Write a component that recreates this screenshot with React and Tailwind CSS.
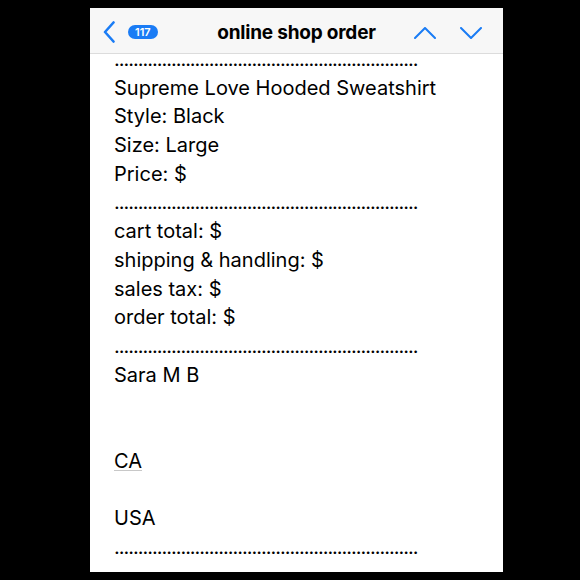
import { Fragment } from 'react'

const DOTS = '.'.repeat(64)

const LINES = [
  { text: DOTS, dots: true },
  { text: 'Supreme Love Hooded Sweatshirt' },
  { text: 'Style: Black' },
  { text: 'Size: Large' },
  { text: 'Price: $' },
  { text: DOTS, dots: true },
  { text: 'cart total: $' },
  { text: 'shipping & handling: $' },
  { text: 'sales tax: $' },
  { text: 'order total: $' },
  { text: DOTS, dots: true },
  { text: 'Sara M B' },
  { text: '' },
  { text: '' },
  { text: 'CA', link: true },
  { text: '' },
  { text: 'USA' },
  { text: DOTS, dots: true },
]

const ChevronLeft = () => (
  <svg width="12" height="22" viewBox="0 0 12 22" fill="none">
    <path d="M10.5 1.5 L2 11 L10.5 20.5" stroke="#1a7cf5" strokeWidth="2.6" strokeLinecap="round" strokeLinejoin="round" />
  </svg>
)

const Chevron = ({ up }) => (
  <svg width="22" height="12" viewBox="0 0 22 12" fill="none">
    <path
      d={up ? 'M1 11 L11 1 L21 11' : 'M1 1 L11 11 L21 1'}
      stroke="#1a7cf5"
      strokeWidth="2"
      strokeLinecap="round"
      strokeLinejoin="round"
    />
  </svg>
)

export default function App() {
  return (
    <div className="h-[580px] w-[580px] bg-black pt-[8px] pl-[90px] font-['Inter','Liberation_Sans',sans-serif]">
      <div className="w-[413px] h-[564px] bg-white flex flex-col overflow-hidden">
        {/* Header */}
        <div className="relative z-10 h-[46px] shrink-0 bg-[#f7f7f7] border-b border-[#dcdcdc] flex items-center px-[13px] pt-[3px]">
          <div className="flex items-center gap-[13px] w-[100px]">
            <ChevronLeft />
            <span className="h-[14px] px-[7px] rounded-full bg-[#1a7cf5] text-white text-[11px] font-semibold leading-[14px]">
              117
            </span>
          </div>
          <div className="flex-1 text-center text-[19px] font-bold text-black tracking-[-0.2px] pt-[2px]">
            online shop order
          </div>
          <div className="flex items-center justify-end gap-[24px] w-[100px] pr-[8px] pt-[2px]">
            <Chevron up />
            <Chevron />
          </div>
        </div>

        {/* Body */}
        <div className="-mt-[9px] pl-[24px] text-[20px] leading-[28.7px] text-black">
          {LINES.map((line, i) => (
            <Fragment key={i}>
              {line.dots ? (
                <div className="h-[28.7px] whitespace-nowrap tracking-[-1.02px]">{line.text}</div>
              ) : line.link ? (
                <div className="h-[28.7px]">
                  <span className="underline decoration-[#c8c8c8] decoration-1 underline-offset-[2px]">{line.text}</span>
                </div>
              ) : (
                <div className="h-[28.7px] whitespace-nowrap">{line.text}</div>
              )}
            </Fragment>
          ))}
        </div>
      </div>
    </div>
  )
}
